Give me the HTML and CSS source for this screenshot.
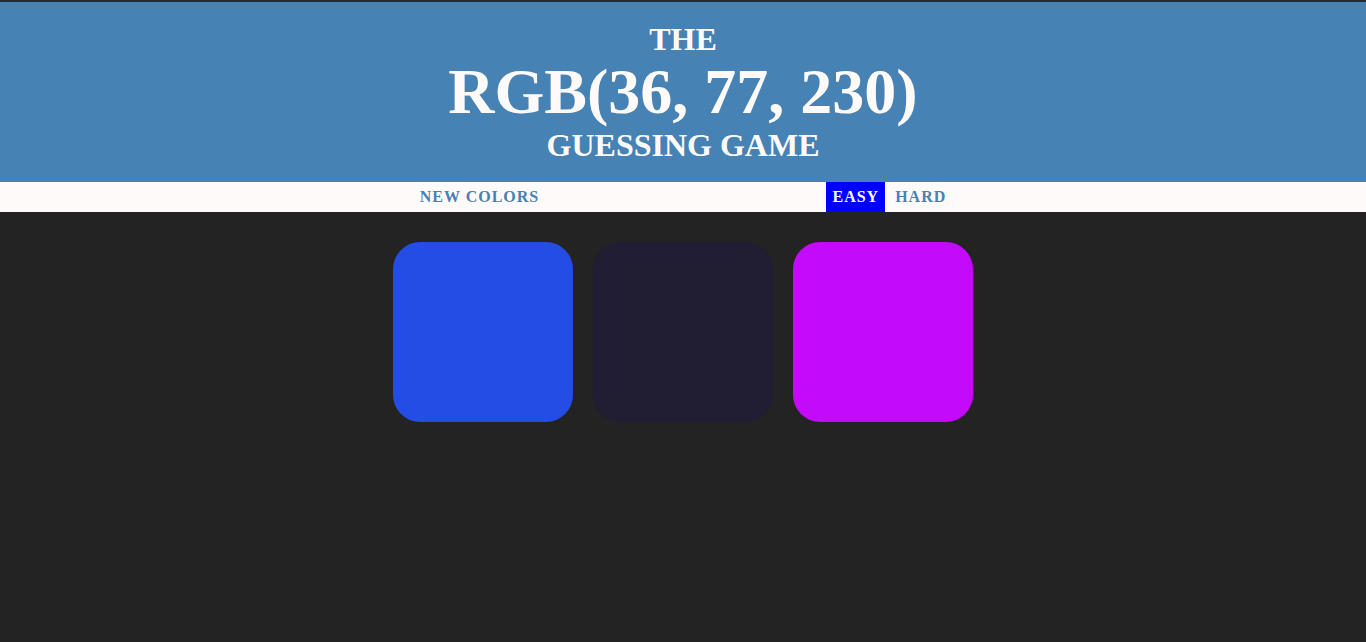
FILE: index.html
```html
<!DOCTYPE html>
<html>
<head>
<meta charset="utf-8">
<title>Color Game</title>
<link rel="stylesheet" href="styles.css">
</head>
<body>
<h1 class="title">
  <span class="title-small">The</span>
  <span class="title-color">RGB(36, 77, 230)</span>
  <span class="title-small">Guessing Game</span>
</h1>
<div class="stripe">
  <button class="btn">New Colors</button>
  <span class="message"></span>
  <button class="btn btn-selected">Easy</button>
  <button class="btn">Hard</button>
</div>
<div class="board">
  <div class="square sq-1"></div>
  <div class="square sq-2"></div>
  <div class="square sq-3"></div>
</div>
</body>
</html>
```
FILE: styles.css
```css
html, body {
  margin: 0;
  padding: 0;
}
body {
  background: #232323;
  border-top: 2px solid #2a2a2a;
  font-family: "Liberation Serif", "Times New Roman", serif;
  min-height: 640px;
}
.title {
  margin: 0;
  background: steelblue;
  color: #fffafa;
  text-align: center;
  text-transform: uppercase;
  font-weight: bold;
  line-height: 1.1;
  padding: 20px 0 19px;
  font-size: 32px;
}
.title-small, .title-color {
  display: block;
}
.title-color {
  font-size: 200%;
}
.stripe {
  background: #fffafa;
  height: 30px;
  display: flex;
  justify-content: center;
  gap: 4px;
}
.btn {
  border: none;
  background: none;
  text-transform: uppercase;
  height: 100%;
  font-family: inherit;
  font-weight: 700;
  font-size: 16px;
  color: steelblue;
  letter-spacing: 1px;
  padding: 1px 6px;
  margin: 0;
  cursor: pointer;
}
.btn-selected {
  color: #fffafa;
  background: blue;
}
.message {
  width: 20%;
}
.board {
  width: 600px;
  margin: 20px auto;
  display: flex;
  flex-wrap: wrap;
}
.square {
  width: 180px;
  height: 180px;
  margin: 10px;
  border-radius: 15%;
}
.sq-1 { background: rgb(36, 77, 230); }
.sq-2 { background: rgb(33, 29, 51); }
.sq-3 { background: rgb(196, 10, 250); }
```
